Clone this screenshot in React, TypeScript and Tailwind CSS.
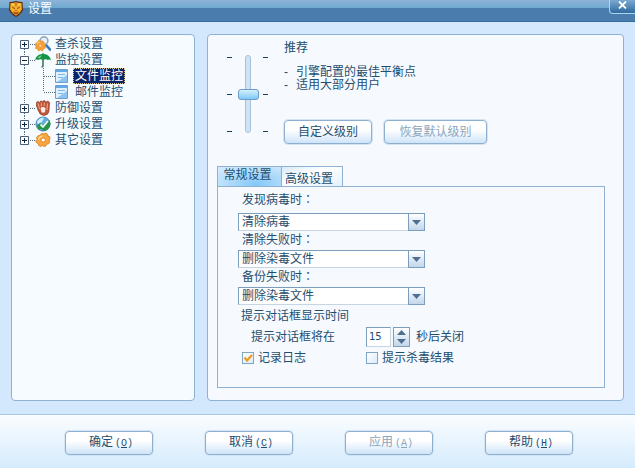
import clsx from "clsx";
import type { ReactNode } from "react";
import { useState } from "react";

const ShieldIcon = () => (
  <svg viewBox="0 0 16 18" className="h-[18px] w-4">
    <path d="M1.500 2 Q5 2 8 1 Q11 2 14.500 2 L15 10 Q13 14.500 8 17 Q3 14.500 1 10Z" fill="#5a2a10" />
    <path d="M2.500 3 Q6 3.200 8 2.200 Q10 3.200 13.500 3 L13.900 9.500 Q12 13.500 8 15.800 Q4 13.500 2.100 9.500Z" fill="#f2b02a" />
    <path d="M4 4h2l-1 2zM12 4h-2l1 2z" fill="#fbe27a" />
    <path d="M4 6.500l3 1.500v1L4.500 8zM12 6.500L9 8v1l2.500-1zM7 10h2l-1 1.500zM5 11.500l3 1 3-1-1 2-2 1-2-1z" fill="#a8431a" />
    <path d="M7.500 3h1v3h-1z" fill="#b5501a" />
  </svg>
);

const ScanIcon = () => (
  <svg viewBox="0 0 16 16" className="h-4 w-4">
    <path d="M11 9l4 4.500" stroke="#2f78bd" strokeWidth="2.600" strokeLinecap="round" />
    <circle cx="9" cy="4.800" r="3.900" fill="#e4f0fb" stroke="#93a9c0" strokeWidth="1.600" />
    <path d="M1 7l2-1 1-2 2 1h2l1 2 1.500 1L10 10l.5 2-2 1-1 2-2-1-2 1-1-2-2-.5L1 10 0 8.500z" fill="#f5a136" stroke="#dd8624" strokeWidth=".6" />
    <path d="M2 8q1-2 3-2" stroke="#ffd38b" fill="none" />
    <circle cx="5.200" cy="9.800" r="1.300" fill="#fdeed2" stroke="#dd8624" strokeWidth=".5" />
  </svg>
);

const UmbrellaIcon = () => (
  <svg viewBox="0 0 16 16" className="h-4 w-4">
    <path d="M8 6v7.500q0 1.500-1.500 1.300" stroke="#3d6b50" strokeWidth="1.500" fill="none" />
    <path d="M0 8.500Q1 2.500 7.200 2L8 .5l.8 1.500Q15 2.500 16 8.500 14.500 7 12.800 8 11 6.500 8 8 5 6.500 3.200 8 1.500 7 0 8.500Z" fill="#159447" />
    <path d="M2.500 6Q4 3.500 7 3.200L5 6.200Z" fill="#6fce8b" />
  </svg>
);

const GloveIcon = () => (
  <svg viewBox="0 0 16 16" className="h-4 w-4">
    <path d="M1.500 2.500q1-1.500 2.500-.5l1 2V1.500Q6.500.3 7.500 2L8 1q2-1 2.500.5v1Q13-.2 14.500 2.500L14 11q-.5 4-5 4.500Q4.500 15 3.500 11L1.500 6Z" fill="#c0583c" stroke="#8f3522" strokeWidth=".7" />
    <path d="M3 3l1.500 6M6 2.500l.5 4M9.500 2.500L9 6M12.500 3.500l-.5 6.500" stroke="#eda88c" fill="none" />
    <path d="M5.500 8q2.500-2 5 0l-.5 4q-2 1.500-3.500 0Z" fill="#fdeae0" />
  </svg>
);

const UpdateIcon = () => (
  <svg viewBox="0 0 16 16" className="h-4 w-4">
    <circle cx="8" cy="8" r="7" fill="#64aede" stroke="#4683b8" />
    <path d="M1.800 6Q4 1.500 9 1.500L7 6 3 8Z" fill="#cfeeff" />
    <path d="M2 9.500l3.500-2.500 1.500 2 3-1 4.500-4 1 4q-1 6-7 7l-2-2-3 .5Z" fill="#279249" />
    <path d="M5.500 8.500L8 11l5-6" stroke="#eafff0" strokeWidth="1.800" fill="none" />
  </svg>
);

const GearIcon = () => (
  <svg viewBox="0 0 16 16" className="h-4 w-4">
    <path d="M6.500 1.500L9 2l1.500-1 2 1.200.2 1.600 2 .8.300 2.200-1 1.200.8 1.800-1.300 2-1.800.2-.7 1.800-2.200.7L7.500 13.500l-2 1-2-1.200-.1-1.700-2-.9L1 8.500l1.100-1.200L1.500 5.500 3 3.700l1.800-.1z" fill="#f8a63f" stroke="#dd7f20" strokeWidth=".9" />
    <path d="M3.500 7.500Q4.200 4.500 7.500 4" stroke="#ffdb9d" fill="none" strokeWidth="1.300" />
    <ellipse cx="8.200" cy="8" rx="2.300" ry="2" fill="#fffaf0" stroke="#d9761b" strokeWidth=".8" />
  </svg>
);

const PageIcon = () => (
  <svg viewBox="0 0 14 14" className="h-3.5 w-3.5">
    <path d="M.5.5h12v13H.5z" fill="#dff0fc" stroke="#6f9fc8" />
    <path d="M1 1h11v2H1z" fill="#63aae6" />
    <path d="M2 13L12 6v7z" fill="#8cc3f0" />
    <path d="M3 5.500h7M3 8.500h5" stroke="#7fb9e8" />
  </svg>
);

const Expander = (props: { open?: boolean; first?: boolean; last?: boolean }) => (
  <svg viewBox="0 0 15 16" className="h-4 w-[15px]">
    <g stroke="#586b7d" strokeDasharray="1 1">
      {!props.first && <path d="M4.500 0v4" />}
      {!props.last && <path d="M4.500 13v3" />}
      <path d="M10 8.500h5" />
    </g>
    <path d="M.5 4.500h8v8h-8z" fill="#fff" stroke="#4a5f74" />
    <path d={props.open ? "M2 8.500h5" : "M2 8.500h5M4.500 6v5"} stroke="#15293d" />
  </svg>
);

const Branch = (props: { last?: boolean }) => (
  <svg viewBox="0 0 35 16" className="h-4 w-[35px]">
    <g stroke="#586b7d" strokeDasharray="1 1" fill="none">
      <path d="M4.500 0v16" />
      <path d={props.last ? "M23.500 0v8" : "M23.500 0v16"} />
      <path d="M24 8.500h11" />
    </g>
  </svg>
);

const groups: { name: string; icon: ReactNode; children?: string[] }[] = [
  { name: "查杀设置", icon: <ScanIcon /> },
  { name: "监控设置", icon: <UmbrellaIcon />, children: ["文件监控", "邮件监控"] },
  { name: "防御设置", icon: <GloveIcon /> },
  { name: "升级设置", icon: <UpdateIcon /> },
  { name: "其它设置", icon: <GearIcon /> },
];

const Tree = () => {
  const [selected, setSelected] = useState("文件监控");
  return (
    <ul>
      {groups.map(({ name, icon, children }, i) => (
        <li key={name}>
          <div className="flex h-4 items-center">
            <Expander open={!!children} first={i === 0} last={i === groups.length - 1} />
            {icon}
            <button className="ml-1 leading-4">{name}</button>
          </div>
          {children && (
            <ul>
              {children.map((child, j) => (
                <li key={child} className="flex h-4 items-center">
                  <Branch last={j === children.length - 1} />
                  <PageIcon />
                  <button
                    onClick={() => setSelected(child)}
                    className={clsx(
                      "ml-1 h-4 border border-dotted px-px leading-[14px]",
                      selected === child ? "border-[#d9c98f] bg-[#0a246a] text-white" : "border-transparent"
                    )}
                  >
                    {child}
                  </button>
                </li>
              ))}
            </ul>
          )}
        </li>
      ))}
    </ul>
  );
};

const Ticks = () => (
  <div className="flex h-[75px] flex-col justify-between">
    <span className="h-px w-[5px] bg-[#17405c]" />
    <span className="h-px w-[5px] bg-[#17405c]" />
    <span className="h-px w-[5px] bg-[#17405c]" />
  </div>
);

const LevelSlider = () => (
  <div className="flex h-[78px] items-center gap-[5px]">
    <Ticks />
    <input
      type="range"
      aria-label="级别"
      min={0}
      max={2}
      defaultValue={1}
      className="h-[78px] w-[21px] appearance-none bg-transparent [writing-mode:vertical-lr] [&::-webkit-slider-runnable-track]:mx-auto [&::-webkit-slider-runnable-track]:w-1.5 [&::-webkit-slider-runnable-track]:rounded-sm [&::-webkit-slider-runnable-track]:border [&::-webkit-slider-runnable-track]:border-[#a4c2dc] [&::-webkit-slider-runnable-track]:bg-[#cfe3f5] [&::-webkit-slider-thumb]:ml-[-8px] [&::-webkit-slider-thumb]:h-[11px] [&::-webkit-slider-thumb]:w-[21px] [&::-webkit-slider-thumb]:appearance-none [&::-webkit-slider-thumb]:rounded-[3px] [&::-webkit-slider-thumb]:border [&::-webkit-slider-thumb]:border-[#6c9cc4] [&::-webkit-slider-thumb]:bg-linear-to-b [&::-webkit-slider-thumb]:from-[#d5f0ff] [&::-webkit-slider-thumb]:to-[#7cc8f7]"
    />
    <Ticks />
  </div>
);

const Button = (props: { children: ReactNode; className?: string; disabled?: boolean }) => (
  <button
    disabled={props.disabled}
    className={clsx(
      "h-6 rounded border border-[#8fafce] bg-linear-to-b from-white from-40% to-[#cfe4f8] leading-5 whitespace-nowrap shadow-[0_0_0_1px_#d3e5f5] disabled:text-[#8ba6bd]",
      props.className
    )}
  >
    {props.children}
  </button>
);

const Select = (props: { id: string; label: string; value: string }) => (
  <div className="group">
    <label htmlFor={props.id} className="ml-1 block leading-[19px] group-first:mb-[3px]">
      {props.label}
      <span className="font-['Noto_Sans_CJK_TC',sans-serif] leading-none">：</span>
    </label>
    <div className="relative h-[18px] w-[187px]">
      <select
        id={props.id}
        defaultValue={props.value}
        className="block h-full w-full appearance-none border border-t-[#7c9dbc] border-r-[#8ba9c6] border-b-[#c5d5e4] border-l-[#7c9dbc] bg-white pr-5 pl-[3px] leading-4"
      >
        <option>清除病毒</option>
        <option>删除染毒文件</option>
      </select>
      <span className="pointer-events-none absolute top-0 right-0 flex h-[18px] w-[17px] items-center justify-center border border-[#7c9dbc] bg-linear-to-b from-white to-[#c3d6ea]">
        <svg viewBox="0 0 9 5" className="h-[5px] w-[9px]">
          <path d="M0 0h9L4.500 5z" fill="#4d6f94" />
        </svg>
      </span>
    </div>
  </div>
);

const Spinner = () => {
  const [seconds, setSeconds] = useState(15);
  return (
    <div className="flex items-center gap-0.5">
      <input
        id="seconds"
        type="number"
        value={seconds}
        onChange={(e) => setSeconds(Number(e.target.value))}
        className="h-5 w-[25px] appearance-none border border-t-[#7c9dbc] border-r-[#c5d5e4] border-b-[#c5d5e4] border-l-[#7c9dbc] bg-white pl-0.5 font-['DejaVu_Sans',sans-serif] text-[10px] [&::-webkit-inner-spin-button]:appearance-none"
      />
      <div className="flex h-5 w-[17px] flex-col border border-[#7c9dbc] bg-linear-to-b from-white to-[#c3d6ea]">
        <button aria-label="增加" onClick={() => setSeconds(seconds + 1)} className="flex flex-1 items-center justify-center">
          <svg viewBox="0 0 9 5" className="h-[5px] w-[9px]">
            <path d="M0 5h9L4.500 0z" fill="#4d6f94" />
          </svg>
        </button>
        <button aria-label="减少" onClick={() => setSeconds(seconds - 1)} className="flex flex-1 items-center justify-center">
          <svg viewBox="0 0 9 5" className="h-[5px] w-[9px]">
            <path d="M0 0h9L4.500 5z" fill="#4d6f94" />
          </svg>
        </button>
      </div>
    </div>
  );
};

const Checkbox = (props: { label: string; checked?: boolean }) => (
  <label className="flex items-center gap-1">
    <span className="grid h-3 w-3">
      <input
        type="checkbox"
        defaultChecked={props.checked}
        className="peer col-start-1 row-start-1 h-3 w-3 appearance-none border border-[#7fa6c8] bg-linear-to-br from-white to-[#dcebf8]"
      />
      <svg viewBox="0 0 12 12" className="pointer-events-none invisible col-start-1 row-start-1 h-3 w-3 peer-checked:visible">
        <path d="M2.500 5.500L5 8.500 10 3" fill="none" stroke="#f09a1c" strokeWidth="2.200" />
      </svg>
    </span>
    {props.label}
  </label>
);

const actions = [
  { name: "确定", hotkey: "O" },
  { name: "取消", hotkey: "C" },
  { name: "应用", hotkey: "A", disabled: true },
  { name: "帮助", hotkey: "H" },
];

export default function App() {
  const [tab, setTab] = useState("常规设置");
  return (
    <div className="flex min-h-screen flex-col bg-[#d3e8fd] font-['Liberation_Sans','Noto_Sans_CJK_SC',sans-serif] text-xs text-[#1f4e6e]">
      <header className="flex h-[22px] items-start justify-between border-b border-[#356c9f] bg-linear-to-b from-[#8db3d8] from-0% via-[#6fa9d0] via-36% to-[#4a7cae] to-36%">
        <div className="flex h-[18px] items-center gap-1 pl-2">
          <ShieldIcon />
          <h1 className="leading-4 text-white">设置</h1>
        </div>
        <button
          aria-label="关闭"
          className="flex h-3.5 w-[26px] justify-center rounded-bl border-b border-l border-[#a9d6f3] bg-linear-to-b from-[#7aa9d0] to-[#316b9f]"
        >
          <svg viewBox="0 0 9 8" className="mt-px h-2 w-[9px]">
            <path d="M1 .5l7 7M8 .5l-7 7" stroke="#fff" strokeWidth="1.800" />
          </svg>
        </button>
      </header>

      <main className="flex flex-1 gap-3 px-[11px] pt-3 pb-[13px]">
        <nav className="w-[184px] shrink-0 rounded border border-[#8fb1d3] bg-[#f6fbff] py-px pl-2">
          <Tree />
        </nav>

        <section className="flex-1 rounded border border-[#8fb1d3] bg-[#f6faff] pt-1 pr-[18px] pb-3 pl-[9px]">
          <div className="flex gap-4 pl-2.5">
            <div className="pt-4">
              <LevelSlider />
            </div>
            <div>
              <h2 className="h-[18px] leading-[18px]">推荐</h2>
              <ul className="pt-[9px] leading-[13px]">
                <li className="flex">
                  <span className="w-3">-</span>引擎配置的最佳平衡点
                </li>
                <li className="flex">
                  <span className="w-3">-</span>适用大部分用户
                </li>
              </ul>
              <div className="flex gap-3 pt-7">
                <Button className="w-[88px]">自定义级别</Button>
                <Button className="w-[103px]" disabled>
                  恢复默认级别
                </Button>
              </div>
            </div>
          </div>

          <div role="tablist" className="mt-[22px] flex h-5">
            {["常规设置", "高级设置"].map((name) => (
              <button
                key={name}
                role="tab"
                aria-selected={tab === name}
                onClick={() => setTab(name)}
                className={clsx(
                  "border border-b-0 border-[#8fb1d3]",
                  tab === name
                    ? "w-[65px] bg-radial-[at_60%_90%] from-[#84c8f8] to-[#d9edfc] pr-1 pb-1"
                    : "w-[61px] border-l-0 bg-linear-to-br from-[#d6eafb] via-white via-40% to-[#e3f0fb] pt-1 pr-1.5"
                )}
              >
                <span className="block leading-4">{name}</span>
              </button>
            ))}
          </div>
          <div role="tabpanel" className="border border-[#8fb1d3] pt-1 pb-[18px] pl-5">
            <div>
              <Select id="found" label="发现病毒时" value="清除病毒" />
              <Select id="clean-failed" label="清除失败时" value="删除染毒文件" />
              <Select id="backup-failed" label="备份失败时" value="删除染毒文件" />
            </div>
            <p className="mt-px ml-[3px] h-5 leading-5">提示对话框显示时间</p>
            <div className="grid h-[21px] grid-cols-[128px_auto_1fr] items-center">
              <label htmlFor="seconds" className="pl-[13px]">
                提示对话框将在
              </label>
              <Spinner />
              <span className="pl-1.5">秒后关闭</span>
            </div>
            <div className="grid h-[22px] grid-cols-[124px_1fr] items-center pl-1">
              <Checkbox label="记录日志" checked />
              <Checkbox label="提示杀毒结果" />
            </div>
          </div>
        </section>
      </main>

      <footer className="flex justify-between border-t border-[#a6c8e8] bg-linear-to-b from-[#fbfdff] to-[#d5ebfd] pt-4 pr-[58px] pb-[13px] pl-[61px]">
        {actions.map(({ name, hotkey, disabled }) => (
          <Button key={name} className="mx-1 w-[88px] pl-1" disabled={disabled}>
            {name}
            <span className="pl-0.5 font-['Liberation_Mono',monospace] text-[10px]">
              (<u>{hotkey}</u>)
            </span>
          </Button>
        ))}
      </footer>
    </div>
  );
}
